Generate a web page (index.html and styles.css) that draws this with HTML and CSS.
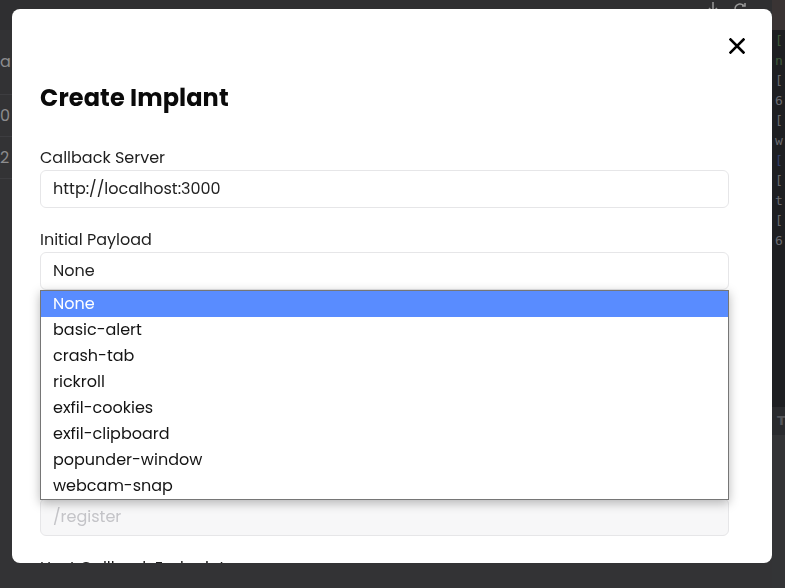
FILE: index.html
```html
<!DOCTYPE html>
<html lang="en">
<head>
<meta charset="utf-8">
<title>Create Implant</title>
<link rel="stylesheet" href="styles.css">
</head>
<body>
<div class="app">
  <header class="topbar">
    <div class="topbar-main">
      <div class="top-actions">
        <svg class="top-icon" width="16" height="16" viewBox="0 0 16 16"><path d="M8 1v10M4 7l4 4 4-4M3 14h10" fill="none" stroke="#9a9a9a" stroke-width="1.5"/></svg>
        <svg class="top-icon" width="16" height="16" viewBox="0 0 16 16"><path d="M13 8a5 5 0 1 1-1.5-3.6M13 2v3h-3" fill="none" stroke="#9a9a9a" stroke-width="1.5"/></svg>
      </div>
    </div>
    <div class="topbar-side"></div>
  </header>
  <div class="workspace">
    <section class="table">
      <div class="t-row t-head">a</div>
      <div class="t-row">0</div>
      <div class="t-row">2</div>
    </section>
    <aside class="side">
      <div class="log">
        <div class="log-line g">[</div>
        <div class="log-line g">n</div>
        <div class="log-line">[</div>
        <div class="log-line">6</div>
        <div class="log-line">[</div>
        <div class="log-line">w</div>
        <div class="log-line b">[</div>
        <div class="log-line">[</div>
        <div class="log-line">t</div>
        <div class="log-line">[</div>
        <div class="log-line">6</div>
      </div>
      <div class="side-bar">T</div>
      <div class="side-rest"></div>
    </aside>
  </div>
</div>

<div class="backdrop">
  <div class="modal">
    <button class="close" aria-label="Close">
      <svg width="16" height="16" viewBox="0 0 16 16"><path d="M1.5 1.5l13 13M14.5 1.5l-13 13" stroke="#000" stroke-width="2.6" stroke-linecap="square"/></svg>
    </button>
    <h2 class="title">Create Implant</h2>
    <form class="form">
      <div class="field">
        <label class="label">Callback Server</label>
        <div class="input">http://localhost:3000</div>
      </div>
      <div class="field">
        <label class="label">Initial Payload</label>
        <div class="input select">None</div>
        <ul class="dropdown">
          <li class="opt selected">None</li>
          <li class="opt">basic-alert</li>
          <li class="opt">crash-tab</li>
          <li class="opt">rickroll</li>
          <li class="opt">exfil-cookies</li>
          <li class="opt">exfil-clipboard</li>
          <li class="opt">popunder-window</li>
          <li class="opt">webcam-snap</li>
        </ul>
      </div>
      <div class="field">
        <label class="label">Beacon Interval (ms)</label>
        <div class="input">5000</div>
      </div>
      <div class="field">
        <label class="label">Implant Name</label>
        <div class="input placeholder">implant</div>
      </div>
      <div class="field">
        <label class="label">Register Endpoint</label>
        <div class="input disabled">/register</div>
      </div>
      <div class="field">
        <label class="label">Host Callback Endpoint</label>
        <div class="input disabled">/callback</div>
      </div>
    </form>
  </div>
</div>
</body>
</html>
```

FILE: styles.css
```css
* { box-sizing: border-box; }
html, body { margin: 0; padding: 0; }
body {
  width: 785px;
  height: 588px;
  overflow: hidden;
  background: #333335;
  font-family: "Poppins", "Inter", "Noto Sans", sans-serif;
}

.app { display: flex; flex-direction: column; height: 588px; }
.topbar { display: flex; height: 30px; flex: none; }
.topbar-main { flex: 1; background: #2f2f31; display: flex; justify-content: flex-end; }
.top-actions { display: flex; gap: 11px; padding: 1px 24px 0 0; }
.topbar-side { width: 13px; background: #3a3434; }

.workspace { flex: 1; display: flex; }
.table { flex: 1; background: #333335; }
.t-row {
  height: 42px;
  border-bottom: 1px solid #3d3d40;
  color: #8c8c8e;
  font-size: 16px;
  line-height: 41px;
  padding-left: 0;
  overflow: hidden;
  white-space: nowrap;
}
.t-head { height: 65px; line-height: 64px; background: #323234; }

.side { width: 13px; display: flex; flex-direction: column; }
.log {
  height: 377px;
  background: #1e1f22;
  padding: 1px 0 0 3px;
  font-family: "DejaVu Sans Mono", monospace;
  font-size: 13px;
  line-height: 20px;
  color: #6a6b70;
  overflow: hidden;
}
.log-line.g { color: #3f5a3a; }
.log-line.b { color: #34406a; }
.side-bar {
  height: 28px;
  background: #2a2b2e;
  color: #55565a;
  font: bold 13px/28px "DejaVu Sans", sans-serif;
  padding-left: 5px;
}
.side-rest { flex: 1; background: #333436; }

.backdrop { position: fixed; inset: 0; }
.modal {
  position: absolute;
  left: 12px;
  top: 9px;
  width: 760px;
  height: 554px;
  background: #fff;
  border-radius: 8px;
  overflow: hidden;
  padding: 71px 43px 0 28px;
}
.close {
  position: absolute;
  top: 29px;
  right: 27px;
  width: 16px;
  height: 16px;
  padding: 0;
  border: 0;
  background: none;
  display: flex;
}
.title {
  margin: 0 0 30px;
  font-size: 24px;
  line-height: 36px;
  font-weight: 700;
  color: #0a0a0a;
  letter-spacing: 0.1px;
}
.form { display: flex; flex-direction: column; gap: 20px; }
.field { position: relative; display: flex; flex-direction: column; }
.label { font-size: 16px; line-height: 24px; color: #1e1e1e; }
.input {
  height: 38px;
  border: 1px solid #e6e6e8;
  border-radius: 6px;
  padding: 0 12px;
  font-size: 16px;
  line-height: 36px;
  color: #222;
}
.input.placeholder { color: #b5b5b8; }
.input.disabled { background: #f7f7f8; color: #c4c4c8; }

.dropdown {
  position: absolute;
  left: 0;
  right: 0;
  top: 62px;
  margin: 0;
  padding: 0;
  list-style: none;
  background: #fff;
  border: 1px solid #767676;
  box-shadow: 0 3px 10px rgba(0, 0, 0, 0.28);
  z-index: 2;
}
.opt {
  height: 26px;
  line-height: 26px;
  padding-left: 12px;
  font-size: 16px;
  color: #141414;
}
.opt.selected { background: #598cff; color: #fff; }
```
